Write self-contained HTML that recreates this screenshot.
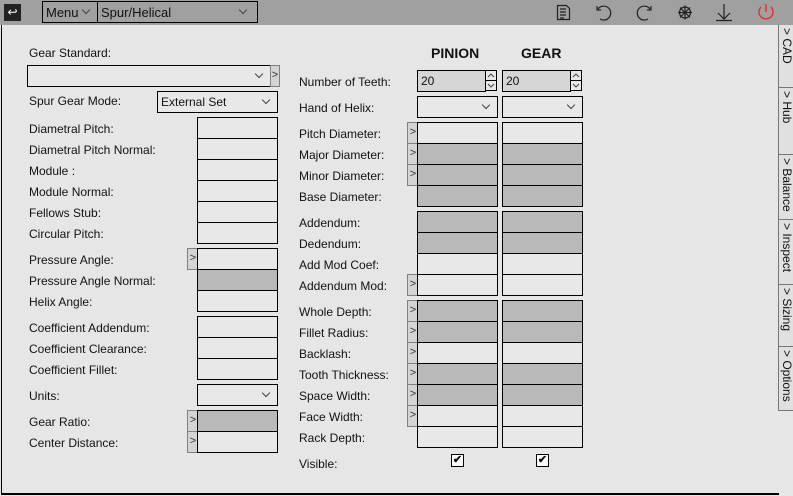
<!DOCTYPE html><html><head><style>
*{box-sizing:border-box;margin:0;padding:0}
body{width:793px;height:496px;background:#e6e6e6;font-family:"Liberation Sans",sans-serif;font-size:12px;color:#111;position:relative;overflow:hidden}
div,svg{position:absolute}
.tb{left:0;top:0;width:793px;height:25px;background:#a0a0a0}
.pn{left:1px;top:25px;width:778px;height:470px;border-left:1px solid #000;border-bottom:2px solid #000}
.l{white-space:nowrap}
.b{width:81px;height:22px;border:1px solid #000;background:#e8e8e8}
.g{background:#b9b9b9}
.a{width:11px;height:22px;border:1px solid #808080;border-right:none;background:#d4d4d4;font-size:11px;line-height:19px;text-align:center;color:#333}
.dd::after{content:"";position:absolute;right:8px;top:5px;width:5px;height:5px;border-right:1px solid #444;border-bottom:1px solid #444;transform:rotate(45deg)}
.tab{left:778px;width:15px;border-left:1px solid #777;border-bottom:1px solid #777;background:#e0e0e0}
.tab span{position:absolute;left:1px;top:3px;writing-mode:vertical-rl;font-size:12px;white-space:nowrap}
.h{font-weight:bold;font-size:14px}
.cb{width:13px;height:13px;border:1px solid #000;background:#fff;font-size:11px;line-height:11px;text-align:center;font-weight:bold}
.sp{width:12px;height:11px;border:1px solid #000;background:#e8e8e8}
</style></head><body>
<div class="tb"></div>
<div style="left:4px;top:4px;width:17px;height:17px;background:#222;color:#fff;font-size:12px;line-height:16px;text-align:center">↩</div>
<div style="left:42px;top:1px;width:216px;height:22px;border:1px solid #000;background:#a0a0a0"></div>
<div style="left:97px;top:1px;width:1px;height:22px;background:#000"></div>
<div class="l" style="left:46px;top:5px;font-size:13px">Menu</div>
<div class="dd" style="left:83px;top:2px;width:14px;height:18px"></div>
<div class="l" style="left:101px;top:5px;font-size:13px">Spur/Helical</div>
<div class="dd" style="left:236px;top:2px;width:18px;height:18px"></div>
<svg style="left:0;top:0" width="793" height="25" fill="none" stroke="#222" stroke-width="1.2">
<path d="M557.5 5.5h9l3 3v11h-12z M560 9h6 M560 12h6 M560 15h6 M560 18h4"/>
<path d="M598 9a7 7 0 1 1 2 10 M597 6v4h4"/>
<path d="M650 9a7 7 0 1 0 -2 10 M651 6v4h-4"/>
<circle cx="685" cy="12.5" r="5.5"/><path d="M678 12.5h14 M685 5.5v14 M680 7.5l10 10 M690 7.5l-10 10"/>
<path d="M724 4v15 M718 13l6 6 6-6 M716 20.5h16"/>
<path stroke="#e03030" stroke-width="1.4" d="M766 4v8 M761 7a7 7 0 1 0 10 0"/>
</svg>
<div class="pn"></div>
<div class="tab" style="top:25px;height:63px"><span>&gt; CAD</span></div>
<div class="tab" style="top:88px;height:67px"><span>&gt; Hub</span></div>
<div class="tab" style="top:155px;height:65px"><span>&gt; Balance</span></div>
<div class="tab" style="top:220px;height:65px"><span>&gt; Inspect</span></div>
<div class="tab" style="top:285px;height:62px"><span>&gt; Sizing</span></div>
<div class="tab" style="top:347px;height:64px"><span>&gt; Options</span></div>

<div class="l" style="left:29px;top:46px">Gear Standard:</div>
<div class="b dd" style="left:27px;top:65px;width:244px"></div>
<div class="a" style="left:270px;top:65px;width:10px;border-right:1px solid #808080">&gt;</div>
<div class="l" style="left:29px;top:94px">Spur Gear Mode:</div>
<div class="b dd" style="left:157px;top:91px;width:121px"></div>
<div class="l" style="left:161px;top:95px">External Set</div>

<div class="l" style="left:29px;top:122px">Diametral Pitch:</div><div class="b" style="left:197px;top:117px"></div>
<div class="l" style="left:29px;top:143px">Diametral Pitch Normal:</div><div class="b" style="left:197px;top:138px"></div>
<div class="l" style="left:29px;top:164px">Module :</div><div class="b" style="left:197px;top:159px"></div>
<div class="l" style="left:29px;top:185px">Module Normal:</div><div class="b" style="left:197px;top:180px"></div>
<div class="l" style="left:29px;top:206px">Fellows Stub:</div><div class="b" style="left:197px;top:201px"></div>
<div class="l" style="left:29px;top:227px">Circular Pitch:</div><div class="b" style="left:197px;top:222px"></div>

<div class="l" style="left:29px;top:253px">Pressure Angle:</div><div class="a" style="left:187px;top:248px">&gt;</div><div class="b" style="left:197px;top:248px"></div>
<div class="l" style="left:29px;top:274px">Pressure Angle Normal:</div><div class="b g" style="left:197px;top:269px"></div>
<div class="l" style="left:29px;top:295px">Helix Angle:</div><div class="b" style="left:197px;top:290px"></div>

<div class="l" style="left:29px;top:321px">Coefficient Addendum:</div><div class="b" style="left:197px;top:316px"></div>
<div class="l" style="left:29px;top:342px">Coefficient Clearance:</div><div class="b" style="left:197px;top:337px"></div>
<div class="l" style="left:29px;top:363px">Coefficient Fillet:</div><div class="b" style="left:197px;top:358px"></div>

<div class="l" style="left:29px;top:389px">Units:</div><div class="b dd" style="left:197px;top:384px"></div>
<div class="l" style="left:29px;top:415px">Gear Ratio:</div><div class="a" style="left:187px;top:410px">&gt;</div><div class="b g" style="left:197px;top:410px"></div>
<div class="l" style="left:29px;top:436px">Center Distance:</div><div class="a" style="left:187px;top:431px">&gt;</div><div class="b" style="left:197px;top:431px"></div>

<div class="l h" style="left:431px;top:45px">PINION</div>
<div class="l h" style="left:521px;top:45px">GEAR</div>

<div class="l" style="left:299px;top:75px">Number of Teeth:</div>
<div class="b" style="left:417px;top:70px;width:69px;background:#d6d6d6"></div><div class="l" style="left:421px;top:74px">20</div>
<div class="sp" style="left:485px;top:70px"></div><div class="sp" style="left:485px;top:80px"></div>
<div class="b" style="left:502px;top:70px;width:69px;background:#d6d6d6"></div><div class="l" style="left:506px;top:74px">20</div>
<div class="sp" style="left:570px;top:70px"></div><div class="sp" style="left:570px;top:80px"></div>
<svg style="left:0;top:0" width="600" height="100" fill="none" stroke="#444" stroke-width="1">
<path d="M488 77l3-3 3 3 M488 84l3 3 3-3 M573 77l3-3 3 3 M573 84l3 3 3-3"/></svg>
<div class="l" style="left:299px;top:101px">Hand of Helix:</div>
<div class="b dd" style="left:417px;top:96px"></div><div class="b dd" style="left:502px;top:96px"></div>

<div class="l" style="left:299px;top:127px">Pitch Diameter:</div><div class="a" style="left:407px;top:122px">&gt;</div><div class="b" style="left:417px;top:122px"></div><div class="b" style="left:502px;top:122px"></div>
<div class="l" style="left:299px;top:148px">Major Diameter:</div><div class="a" style="left:407px;top:143px">&gt;</div><div class="b g" style="left:417px;top:143px"></div><div class="b g" style="left:502px;top:143px"></div>
<div class="l" style="left:299px;top:169px">Minor Diameter:</div><div class="a" style="left:407px;top:164px">&gt;</div><div class="b g" style="left:417px;top:164px"></div><div class="b g" style="left:502px;top:164px"></div>
<div class="l" style="left:299px;top:190px">Base Diameter:</div><div class="b g" style="left:417px;top:185px"></div><div class="b g" style="left:502px;top:185px"></div>

<div class="l" style="left:299px;top:216px">Addendum:</div><div class="b g" style="left:417px;top:211px"></div><div class="b g" style="left:502px;top:211px"></div>
<div class="l" style="left:299px;top:237px">Dedendum:</div><div class="b g" style="left:417px;top:232px"></div><div class="b g" style="left:502px;top:232px"></div>
<div class="l" style="left:299px;top:258px">Add Mod Coef:</div><div class="b" style="left:417px;top:253px"></div><div class="b" style="left:502px;top:253px"></div>
<div class="l" style="left:299px;top:279px">Addendum Mod:</div><div class="a" style="left:407px;top:274px">&gt;</div><div class="b" style="left:417px;top:274px"></div><div class="b" style="left:502px;top:274px"></div>

<div class="l" style="left:299px;top:305px">Whole Depth:</div><div class="a" style="left:407px;top:300px">&gt;</div><div class="b g" style="left:417px;top:300px"></div><div class="b g" style="left:502px;top:300px"></div>
<div class="l" style="left:299px;top:326px">Fillet Radius:</div><div class="a" style="left:407px;top:321px">&gt;</div><div class="b g" style="left:417px;top:321px"></div><div class="b g" style="left:502px;top:321px"></div>
<div class="l" style="left:299px;top:347px">Backlash:</div><div class="a" style="left:407px;top:342px">&gt;</div><div class="b" style="left:417px;top:342px"></div><div class="b" style="left:502px;top:342px"></div>
<div class="l" style="left:299px;top:368px">Tooth Thickness:</div><div class="a" style="left:407px;top:363px">&gt;</div><div class="b g" style="left:417px;top:363px"></div><div class="b g" style="left:502px;top:363px"></div>
<div class="l" style="left:299px;top:389px">Space Width:</div><div class="a" style="left:407px;top:384px">&gt;</div><div class="b g" style="left:417px;top:384px"></div><div class="b g" style="left:502px;top:384px"></div>
<div class="l" style="left:299px;top:410px">Face Width:</div><div class="a" style="left:407px;top:405px">&gt;</div><div class="b" style="left:417px;top:405px"></div><div class="b" style="left:502px;top:405px"></div>
<div class="l" style="left:299px;top:431px">Rack Depth:</div><div class="b" style="left:417px;top:426px"></div><div class="b" style="left:502px;top:426px"></div>

<div class="l" style="left:299px;top:457px">Visible:</div>
<div class="cb" style="left:451px;top:454px">✔</div>
<div class="cb" style="left:536px;top:454px">✔</div>
</body></html>
